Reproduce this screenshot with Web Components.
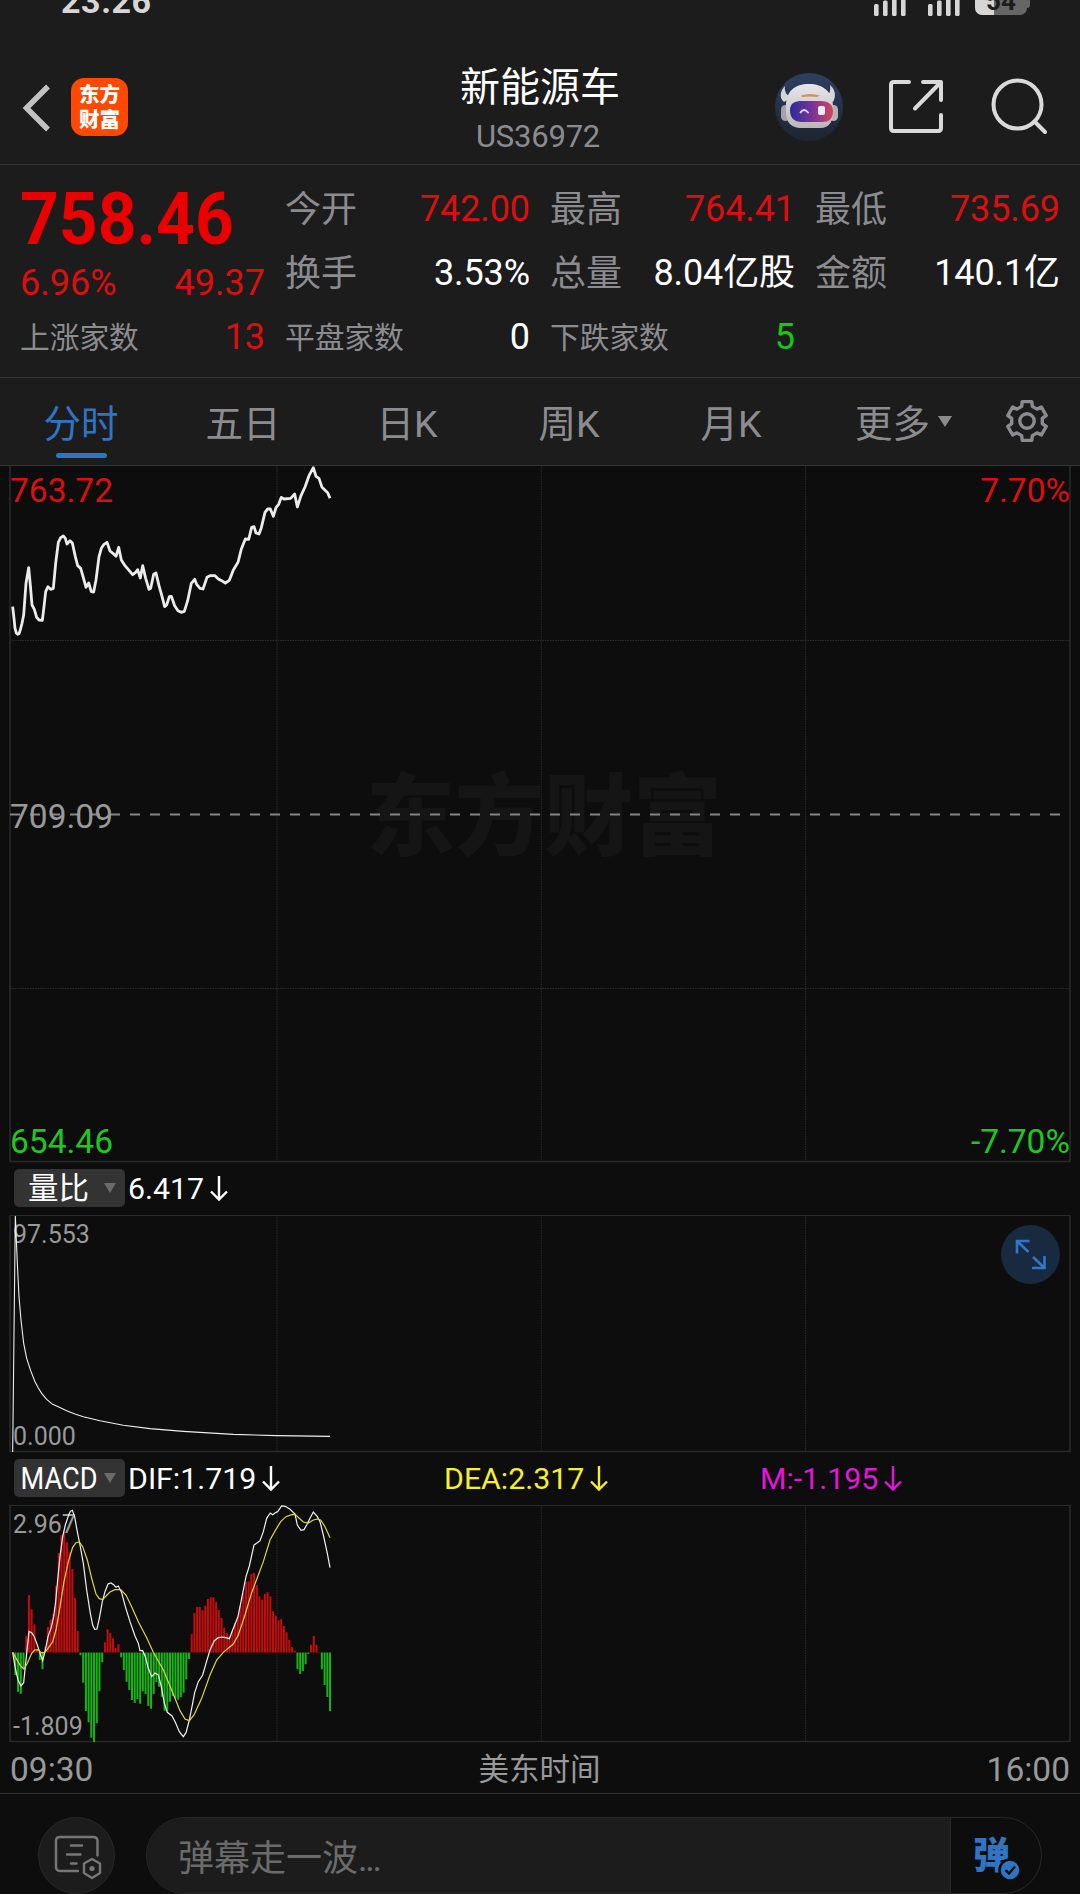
<!DOCTYPE html>
<html lang="zh-CN">
<head>
<meta charset="utf-8">
<title>新能源车 US36972</title>
<style>
html,body{margin:0;padding:0;background:#0d0d0d}
body{width:1080px;height:1894px;overflow:hidden;font-family:Roboto,"Noto Sans CJK SC",sans-serif;color:#fff}
</style>
</head>
<body>
<stock-page></stock-page>
<script>
const define = (name, html, after) => customElements.define(name, class extends HTMLElement {
  connectedCallback() {
    if (this.shadowRoot) return;
    const root = this.attachShadow({mode: 'open'});
    root.innerHTML = typeof html === 'function' ? html(this) : html;
    if (after) after(this, root);
  }
});

/* ---------- status bar ---------- */
define('signal-bars', `<style>:host{display:block;width:32px;height:36px}svg{display:block}</style>
<svg width="32" height="36" fill="#d6d6d6"><rect x="0" y="24" width="4.6" height="12" rx="1.5"/><rect x="9" y="20.5" width="4.6" height="15.5" rx="1.5"/><rect x="18" y="14" width="4.6" height="22" rx="1.5"/><rect x="27" y="8" width="4.6" height="28" rx="1.5"/></svg>`);

define('status-bar', `<style>
:host{display:flex;height:48px;overflow:hidden;justify-content:space-between;align-items:flex-start;box-sizing:border-box;padding:0 50px 0 61px}
.clock{font:700 34px/40px Roboto,sans-serif;margin-top:-19.500px;color:#d6d6d6;letter-spacing:.6px}
.r{display:flex;margin-top:-20px}
signal-bars{margin-right:22px}
signal-bars+signal-bars{margin-right:15px}
.bat{width:52px;height:27px;margin-top:8px;border-radius:7px;background:linear-gradient(90deg,#d6d6d6 19px,#666 19px);color:#1c1c1c;font:700 26px/27px Roboto,sans-serif;text-align:center}
.nub{width:3px;height:14px;margin-top:14px;background:#666;border-radius:0 3px 3px 0}
</style><div class="clock">23:26</div><div class="r"><signal-bars></signal-bars><signal-bars></signal-bars><div class="bat">54</div><div class="nub"></div></div>`);

/* ---------- navigation ---------- */
define('app-logo', `<style>:host{display:flex;flex-direction:column;box-sizing:border-box;padding-top:3px;align-items:center;width:57px;height:58px;border-radius:13px;background:#ff4800;color:#fff;font:900 20.500px/25px "Noto Sans CJK SC",sans-serif}</style><span>东方</span><span>财富</span>`);

define('bot-avatar', `<style>:host{display:block;width:68px;height:68px}svg{display:block}</style>
<svg width="68" height="68" viewBox="0 0 68 68">
<defs><linearGradient id="bg" x2="0" y2="1"><stop stop-color="#2e3f63"/><stop offset="1" stop-color="#1d2430"/></linearGradient>
<linearGradient id="visor"><stop stop-color="#2c2c9c"/><stop offset=".5" stop-color="#76329a"/><stop offset="1" stop-color="#d2475c"/></linearGradient>
<linearGradient id="shell" x2="0" y2="1"><stop stop-color="#e8e6ea"/><stop offset="1" stop-color="#b9b7bd"/></linearGradient></defs>
<circle cx="34" cy="34" r="34" fill="url(#bg)"/>
<path d="M10 13C5 18 4 25 9 29l8-5c-5-1-8-5-7-11zM55 12c6 5 6 12 3 17l-9-5c5-1 7-6 6-12z" fill="#d7d4d8"/>
<rect x="6" y="32" width="9" height="16" rx="4.5" fill="#a5a2a8"/><rect x="54" y="32" width="9" height="16" rx="4.5" fill="#b5b2b8"/>
<path d="M11 33C11 18 20 11 34 11s24 8 24 22c1 15-3 22-13 22H24C14 54 10 47 11 33z" fill="url(#shell)"/>
<path d="M26 22.500q9-3 19 0l-3 1.500q-7-1-15 0z" fill="#cf935f"/>
<path d="M15 37c0-7 5-9 12-9h18c8 0 13 3 13 10 0 8-4 11-11 11H27c-8 0-12-4-12-12z" fill="url(#visor)"/>
<path d="M25.500 39.500q3.500-5 7.500 0" fill="none" stroke="#ddd8f0" stroke-width="2" stroke-linecap="round"/><rect x="43" y="33" width="7" height="9" rx="2" fill="#f2e9f2"/>
</svg>`);

define('nav-header', `<style>
:host{display:grid;grid-template-columns:1fr auto 1fr;height:116px;border-bottom:1px solid #333}
.l,.r{display:flex;align-items:flex-start}
.l{padding:30px 0 0 22px}.l svg{margin:4.500px 20px 0 0}
.r{justify-content:flex-end;padding:25px 33px 0 0}
.r .share{margin:6px 0 0 44px}.r .search{margin:5px 0 0 47px}
svg{display:block}
.t{padding-top:15.500px;text-align:center}
.n{font-size:40px;line-height:48px}
.c{font-size:31px;line-height:36px;margin-top:7px;color:#8c8c90;letter-spacing:-.2px;padding-right:4px}
</style>
<div class="l"><svg width="29" height="50" fill="none" stroke="#c2c2c2" stroke-width="5.500"><path d="M26 3.500L4.500 25L26 46.500"/></svg><app-logo></app-logo></div>
<div class="t"><div class="n">新能源车</div><div class="c">US36972</div></div>
<div class="r"><bot-avatar></bot-avatar>
<svg class="share" width="56" height="56" fill="none" stroke="#dadada" stroke-width="4" stroke-linecap="round" stroke-linejoin="round"><path d="M22 3H7Q4 3 4 6V49Q4 52 7 52H51Q54 52 54 49V36M36 3H54V21M53 4L28 29.500"/></svg>
<svg class="search" width="57" height="57" fill="none" stroke="#dadada" stroke-width="4" stroke-linecap="round"><circle cx="27.500" cy="26.500" r="24"/><path d="M44.500 43.500L55 54"/></svg></div>`);

/* ---------- quote panel ---------- */
define('quote-cell', el => `<style>
:host{display:flex;justify-content:space-between;align-items:baseline;line-height:64px;font-size:36px;white-space:nowrap;letter-spacing:-.1px}
.k{color:#8c8c90;font-weight:400;transform:translateY(1px)}
:host([small]) .k{font-size:29.800px;transform:translateY(-1px)}
.v{color:var(--value,#fff)}
:host([tone=up]){--value:#dc0f0f}:host([tone=down]){--value:#14c814}
</style><span class="k">${el.getAttribute('label')}</span><span class="v"><slot></slot></span>`);

define('quote-panel', `<style>
:host{display:grid;grid-template-columns:repeat(4,245px);column-gap:20px;grid-template-rows:repeat(3,64px);padding:12px 20px 8px;border-bottom:1px solid #333}
.p{grid-row:1/3;padding-top:3px}
.big{font-weight:700;font-size:72px;line-height:80px;color:#eb0000;white-space:nowrap;transform:scaleX(.94);transform-origin:0 0}
.ch{display:flex;justify-content:space-between;font-size:36px;line-height:40px;margin-top:3px;color:#dc0f0f}
</style>
<div class="p"><div class="big">758.46</div><div class="ch"><span>6.96%</span><span>49.37</span></div></div>
<quote-cell label="今开" tone="up">742.00</quote-cell><quote-cell label="最高" tone="up">764.41</quote-cell><quote-cell label="最低" tone="up">735.69</quote-cell>
<quote-cell label="换手">3.53%</quote-cell><quote-cell label="总量">8.04亿股</quote-cell><quote-cell label="金额">140.1亿</quote-cell>
<quote-cell small label="上涨家数" tone="up">13</quote-cell><quote-cell small label="平盘家数">0</quote-cell><quote-cell small label="下跌家数" tone="down">5</quote-cell>`);

/* ---------- tabs ---------- */
define('period-tab', `<style>
:host{display:flex;flex-direction:column;align-items:center;width:162px;padding-top:16px;color:#8c8c90;font-size:37.500px;line-height:60px;font-weight:400}
.row{display:flex}
:host([k]) .row{padding-left:4px}
.tri{display:none;width:0;height:0;border:7px solid transparent;border-top:11px solid #8c8c90;border-bottom:0;margin:22px -23px 0 8px}
:host([menu]) .row{padding-left:2px}
:host([menu]) .tri{display:block}
:host([active]){color:#2f75c4}
:host([active])::after{content:"";width:51px;height:5px;border-radius:3px;background:#2f75c4;margin-top:-1px}
</style><div class="row"><slot></slot><i class="tri"></i></div>`);

define('period-tabs', `<style>
:host{display:flex;height:87px;border-bottom:1px solid #333}
svg{display:block;margin:21px 0 0 33px}
</style>
<period-tab active>分时</period-tab><period-tab>五日</period-tab><period-tab k>日K</period-tab><period-tab k>周K</period-tab><period-tab k>月K</period-tab><period-tab menu>更多</period-tab>
<svg width="44" height="44" viewBox="-22 -22 44 44" fill="none" stroke="#8c8c90" stroke-width="3.400" stroke-linejoin="round"><circle r="7.200"/><path id="g"/></svg>`, (el, root) => {
  const pts = [];
  const corner = (deg, r) => { const a = deg * Math.PI / 180; pts.push((r * Math.cos(a)).toFixed(1) + ' ' + (r * Math.sin(a)).toFixed(1)); };
  for (let k = 0; k < 6; k++) { const c = -90 + k * 60; corner(c - 14, 20); corner(c + 14, 20); corner(c + 20, 15.5); corner(c + 40, 15.5); }
  root.getElementById('g').setAttribute('d', 'M' + pts.join('L') + 'Z');
});

/* ---------- plots ---------- */
const toPath = s => 'M' + s.trim().split(/\s+/).map(p => p.split(',').map(v => (v / 3).toFixed(2)).join(' ')).join('L');

const PRICE = toPath(`38,455 42,490 45,520 49,534 53,538 57,536 60,528 66,505 71,480 78,385 86,338 91,390 96,450 103,463 110,487 117,495 127,496 132,455 137,410 144,395 152,403 160,400 167,325 175,262 182,248 190,243 196,250 201,267 210,257 217,264 226,305 233,332 242,340 250,368 258,397 266,384 274,410 281,411 288,375 297,305 304,280 312,268 321,262 330,288 340,296 348,304 356,277 364,315 375,332 387,346 398,359 407,352 413,344 421,369 428,332 437,370 447,403 452,400 461,358 468,354 477,392 487,428 494,455 500,450 508,425 514,424 524,452 534,467 544,472 553,469 563,437 574,385 584,373 590,388 600,400 609,402 621,367 630,362 645,362 655,372 668,379 676,384 688,376 700,345 714,322 724,282 736,252 746,253 755,217 762,215 768,234 777,237 784,218 795,172 803,162 811,162 820,184 828,158 836,148 844,127 852,132 872,130 884,117 892,156 903,122 915,96 927,62 940,38 948,64 957,70 966,97 983,113 990,130`);
const RATIO = toPath(`38,966 41,700 46,258 52,400 57,500 63,570 71,640 80,685 92,722 105,755 115,774 125,790 140,808 158,823 178,832 200,842 225,852 250,860 300,872 370,886 450,896 550,904 700,913 830,917 990,919`);
const DIF = toPath(`38,487 46,535 54,570 63,588 71,578 79,500 87,424 95,428 103,440 112,465 120,490 128,512 136,480 144,440 153,415 161,380 167,335 173,270 180,200 188,140 196,105 206,75 211,64 217,61 224,80 230,115 240,165 250,220 260,300 271,370 278,405 284,418 291,417 298,385 307,335 315,305 324,282 333,279 342,285 348,292 355,288 365,308 376,350 390,395 405,438 415,460 420,482 428,482 436,500 445,535 455,560 465,549 475,555 484,590 493,640 502,667 516,678 526,697 538,725 550,740 558,728 568,690 576,650 584,608 595,575 608,555 618,520 630,480 643,452 655,443 670,441 688,446 698,420 714,380 726,320 738,260 748,228 762,165 772,158 780,152 790,125 800,85 811,69 818,74 826,68 833,65 845,48 856,49 870,58 885,72 892,105 903,121 912,119 920,105 930,85 940,66 952,80 960,95 970,135 982,190 990,233`);
const DEA = toPath(`38,487 50,508 62,528 72,537 82,520 95,490 104,480 114,479 124,488 134,488 144,475 158,455 168,420 180,350 192,275 205,215 218,172 228,158 238,156 248,170 262,210 275,265 288,312 298,326 308,329 318,318 330,306 345,299 362,299 378,315 395,350 415,395 440,443 460,487 490,540 515,600 540,662 555,687 568,692 582,675 605,625 630,555 650,510 670,487 700,462 715,435 735,375 755,308 775,255 790,215 810,150 828,118 842,95 858,80 875,74 885,73 897,84 910,96 925,99 940,90 952,87 962,90 975,110 990,143`);
const HIST = [487,555,605,611,535,437,315,358,403,480,510,538,470,411,390,372,288,188,136,125,157,187,237,323,423,496,578,663,697,743,756,700,604,517,457,418,429,445,474,463,502,540,575,600,630,639,627,641,604,612,648,656,612,576,590,620,662,664,635,618,625,629,622,608,568,507,433,369,351,351,361,348,327,322,322,336,360,384,413,429,437,424,400,378,348,310,276,274,252,249,286,319,329,312,307,319,364,377,391,387,408,427,450,471,482,538,552,543,523,492,464,438,464,488,538,585,621,664];

const frame = (h, rows) => {
  let s = `<g stroke="#2c2c2c" stroke-width="1" stroke-dasharray="1.500 1" fill="none">`;
  for (const x of [277, 541.3, 805.5]) s += `<path d="M${x} 0V${h - 2}"/>`;
  for (const y of rows) s += `<path d="M10 ${y}H1070"/>`;
  return s + `</g><path d="M10 0V${h - 1.5}H1070V0" fill="none" stroke="#2a2a2a" stroke-width="1.600"/>`;
};

const plotStyle = `
:host{display:grid;width:1080px}
:host>*{grid-area:1/1}
svg{display:block}
.lab{display:flex;flex-direction:column;justify-content:space-between}
.lab div{display:flex;justify-content:space-between}`;

define('price-chart', `<style>${plotStyle}
:host{height:697px;background:#0d0d0d}
.wm{align-self:center;justify-self:center;font:900 89px/100px "Noto Sans CJK SC",sans-serif;color:#151515;padding:0 0 10px 8px}
.lab{padding:5px 10px 1px;font-size:33.500px;line-height:40px}
.up{color:#dc0f0f}.mid{color:#999}.dn{color:#1ec81e}
</style>
<div class="wm">东方财富</div>
<svg width="1080" height="697">${frame(697, [174.5, 522.5])}<path d="M10 348.500H1062" stroke="#858585" stroke-width="2.200" stroke-dasharray="10 10"/></svg>
<div class="lab"><div class="up"><span>763.72</span><span>7.70%</span></div><div class="mid"><span>709.09</span></div><div class="dn"><span>654.46</span><span>-7.70%</span></div></div>
<svg width="1080" height="697"><g transform="translate(0 -11)"><path d="${PRICE}" fill="none" stroke="#ececec" stroke-width="2.800" stroke-linejoin="round"/></g></svg>`);

define('ratio-chart', `<style>${plotStyle}
:host{height:238px}
.lab{padding:5px 13px 1px;font-size:25px;line-height:30px;color:#999}
.ex{justify-self:end;margin:10px 20px 0 0}
</style>
<svg width="1080" height="238">${frame(238, [])}<path d="M10 .5H1070" stroke="#2a2a2a"/></svg>
<div class="lab"><div>97.553</div><div>0.000</div></div>
<svg width="1080" height="238"><g transform="translate(0 -85)"><path d="${RATIO}" fill="none" stroke="#eee" stroke-width="1.100"/></g></svg>
<svg class="ex" width="59" height="59"><circle cx="29.500" cy="29.500" r="29.500" fill="#172a40"/><path d="M28.500 16H16V28.500M16 16L27.500 27M43.500 31V43H31M43.500 43L32 32" fill="none" stroke="#3277c6" stroke-width="2.600"/></svg>`);

define('macd-chart', `<style>${plotStyle}
:host{height:238px}
.lab{padding:5px 13px 1px;font-size:25px;line-height:30px;color:#999}
</style>
<svg width="1080" height="238">${frame(238, [])}<path d="M10 .5H1070" stroke="#2a2a2a"/></svg>
<div class="lab"><div>2.967</div><div>-1.809</div></div>
<svg width="1080" height="238"><g transform="translate(0 -15)" fill="none"><g id="bars" stroke-width="2"></g><path d="${DIF}" stroke="#f2f2f2" stroke-width="1.200"/><path d="${DEA}" stroke="#e0d544" stroke-width="1.200"/></g></svg>`, (el, root) => {
  const zero = 487.5 / 3;
  let up = '', down = '';
  HIST.forEach((v, i) => {
    const seg = `M${((38 + i * 8.137) / 3).toFixed(2)} ${zero}V${(v / 3).toFixed(2)}`;
    if (v < 487) up += seg; else down += seg;
  });
  root.getElementById('bars').innerHTML = `<path d="${up}" stroke="#c80c0c"/><path d="${down}" stroke="#16b416"/>`;
});

/* ---------- indicator rows ---------- */
define('indicator-pill', `<style>
:host{display:flex;box-sizing:border-box;width:111px;height:38px;border-radius:5px;background:#333;align-items:center;justify-content:flex-end;padding-right:9px;font-size:30.500px;line-height:38px;color:#fff}
i{width:0;height:0;border:6px solid transparent;border-top:10px solid #6b6b6b;border-bottom:0}
span{margin-right:14.500px;white-space:nowrap;padding-top:2px}
:host([narrow]) span{transform:scaleX(.89);transform-origin:100% 50%;margin-right:6px;margin-left:-20px;padding-top:1px}
</style><span><slot></slot></span><i></i>`);

define('indicator-value', `<style>
:host{display:flex;width:316px;font-size:30.300px;line-height:52px;white-space:nowrap}
svg{display:block;margin:13px 0 0 5.500px}
</style><slot></slot><svg width="18" height="26" fill="none" stroke="currentColor" stroke-width="2.400"><path d="M9 0V24M1 15.500L9 23.500L17 15.500"/></svg>`);

define('indicator-row', `<style>:host{display:flex;height:52px;padding-left:13.500px}
::slotted(indicator-pill){margin:6px 3.500px 0 0}</style><slot></slot>`);

define('time-axis', `<style>
:host{display:grid;grid-template-columns:1fr auto 1fr;height:48px;padding:2px 10px 0;border-bottom:1px solid #333;font-size:33.500px;line-height:50px;color:#999}
.m{font-size:30.500px;padding-right:1px}.e{text-align:right}
</style><span>09:30</span><span class="m">美东时间</span><span class="e">16:00</span>`);

/* ---------- comment bar ---------- */
define('comment-bar', `<style>
:host{display:flex;height:77px;padding:23px 38px 0;box-sizing:content-box}
.set{box-sizing:border-box;width:77px;height:77px;border-radius:50%;background:#1c1c1c;border:1px solid #292929;margin-right:31px}
svg{display:block}
.box{box-sizing:border-box;display:flex;width:896px;height:77px;border-radius:39px;border:1px solid #292929;overflow:hidden;background:#0d0d0d}
.in{width:804px;background:#1c1c1c;border-right:1px solid #292929;box-sizing:border-box;padding:3px 0 0 31px;font-size:36px;line-height:77px;color:#6b6b6b}
.in span{letter-spacing:-2.200px}
.dm{display:grid;padding:15px 0 0 22px;height:50px}
.dm>*{grid-area:1/1}
.dm b{font:900 37px/40px "Noto Sans CJK SC",sans-serif;color:#2f75c4}
.dm svg{margin:25px 0 0 25px}
</style>
<div class="set"><svg width="75" height="75" fill="none" stroke="#777" stroke-width="2.400" stroke-linecap="round"><path d="M39 53H21Q17 53 17 49V23Q17 19 21 19H54Q58.500 19 58.500 23V37.500M32 27.500H43M28 36.500H41.500M32 45.500H37.500"/><path d="M53 41L61 45.500V55L53 60L45 55V45.500Z" stroke-linejoin="round"/><circle cx="53" cy="50.500" r="2.600" fill="#777" stroke="none"/></svg></div>
<div class="box"><div class="in">弹幕走一波<span>...</span></div><div class="dm"><b>弹</b><svg width="24" height="24"><circle cx="12" cy="12" r="10.500" fill="#2f75c4" stroke="#0d0d0d" stroke-width="2.500"/><path d="M7.500 12L11 15.500L17 8.500" fill="none" stroke="#0d0d0d" stroke-width="2.400"/></svg></div></div>`);

define('stock-page', `<style>
:host{display:flex;flex-direction:column;width:1080px;height:1894px;overflow:hidden}
.top{background:#1c1c1c}
:host>*{flex:none}
</style>
<div class="top"><status-bar></status-bar><nav-header></nav-header><quote-panel></quote-panel><period-tabs></period-tabs></div>
<price-chart></price-chart>
<indicator-row><indicator-pill>量比</indicator-pill><indicator-value>6.417</indicator-value></indicator-row>
<ratio-chart></ratio-chart>
<indicator-row><indicator-pill narrow>MACD</indicator-pill><indicator-value>DIF:1.719</indicator-value><indicator-value style="color:#f5f02a">DEA:2.317</indicator-value><indicator-value style="color:#e614dc">M:-1.195</indicator-value></indicator-row>
<macd-chart></macd-chart>
<time-axis></time-axis>
<comment-bar></comment-bar>`);
</script>
</body>
</html>
